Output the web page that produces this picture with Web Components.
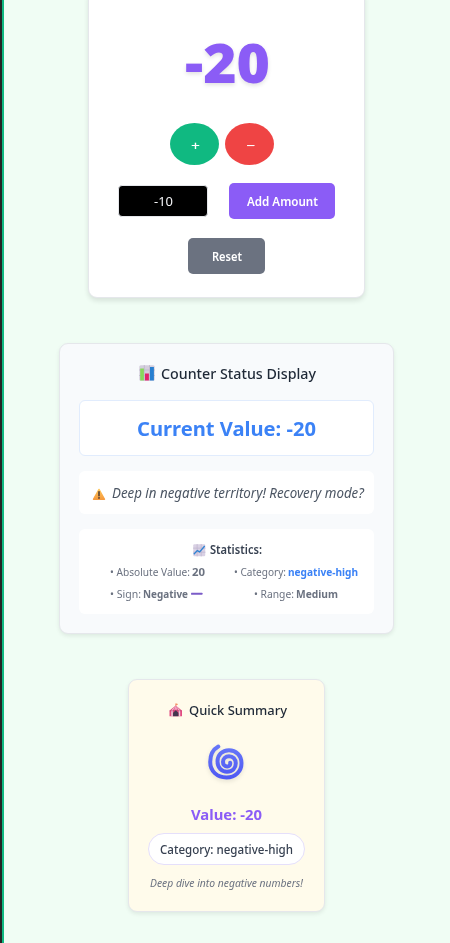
<!DOCTYPE html>
<html lang="en">
<head>
<meta charset="utf-8">
<title>Counter</title>
<style>
html,body{margin:0;height:943px;overflow:hidden}
body{font-family:"Noto Sans","Open Sans",sans-serif;color:#1f2937}
</style>
</head>
<body>
<counter-app></counter-app>
<script>
const define = (name, html, after) => {
  const t = document.createElement('template');
  t.innerHTML = html;
  customElements.define(name, class extends HTMLElement {
    constructor() {
      super();
      this.attachShadow({mode: 'open'}).append(t.content.cloneNode(true));
    }
    connectedCallback() { if (after) after(this, this.shadowRoot); }
  });
};

/* One line of text, condensed horizontally to the width in its "w" attribute. */
define('fit-text', `
<style>
:host{display:block;flex:none;white-space:nowrap;line-height:20px;height:20px}
span{display:inline-block;transform-origin:0 50%;line-height:inherit;vertical-align:top}
</style><span><slot></slot></span>`, (host, root) => {
  const w = +host.getAttribute('w');
  const s = root.querySelector('span');
  host.style.width = w + 'px';
  s.style.transform = 'scaleX(' + w / s.getBoundingClientRect().width + ')';
});

const ICONS = {
  bars: `<rect x=".3" y=".3" width="15.4" height="15.4" rx="1.5" fill="#d4cedd"/><path d="M5.3 0v16M10.5 0v16M0 5h16M0 10.500h16" stroke="#bcb4c9" stroke-width=".7"/><rect x="1.200" y="3.500" width="3.700" height="12" fill="#86d95b"/><rect x="6" y="8.500" width="3.900" height="7" fill="#e0246c"/><rect x="11" y="2" width="3.900" height="13.500" fill="#287fd0"/>`,
  chart: `<rect x=".3" y=".3" width="15.4" height="15.4" rx="1.5" fill="#d9d1e4"/><path d="M5.300 0v16M10.500 0v16M0 5.300h16M0 10.500h16" stroke="#bbb2cb" stroke-width=".8"/><path d="M1 13l4.500-4.500 3 1.500L15 2.500" fill="none" stroke="#2f83d3" stroke-width="1.700"/>`,
  warn: `<defs><linearGradient id="g" x2="0" y2="1"><stop stop-color="#ffc65a"/><stop offset="1" stop-color="#f59a3d"/></linearGradient></defs><path d="M8 2.800L14.300 14H1.700z" fill="url(#g)" stroke="url(#g)" stroke-width="1.600" stroke-linejoin="round"/><path d="M8 5.500v4.500" stroke="#493832" stroke-width="1.700" stroke-linecap="round"/><circle cx="8" cy="12.500" r="1" fill="#493832"/>`,
  minus: `<rect y="6.700" width="16" height="2.600" rx=".6" fill="#7b5cc8"/>`,
  tent: `<path d="M8 3.500V.8l2.200.8L8.300 2.500" fill="#f4875b" stroke="#f4875b" stroke-width=".8"/><path d="M8 3l5.800 4.600 1.600 1.600v6.400H.6V9.200l1.600-1.600z" fill="#e34a80"/><path d="M8 3L4.500 9v6.600H2.700V8.800zM8 3l3.500 6v6.600h1.800V8.800z" fill="#e9ccdc"/><path d="M8 3l2 5H6z" fill="#f1a5bf"/><path d="M.6 9.200h14.800" stroke="#bb4375" stroke-width=".7"/><path d="M4.800 15.600v-4L8 8.700l3.200 2.900v4z" fill="#44364f"/>`,
  spiral: `<defs><linearGradient id="s" x2="0" y2="1"><stop stop-color="#6676f8"/><stop offset="1" stop-color="#505af3"/></linearGradient></defs><path d="M10.300 2.600C5.100 5.500 2.200 11.500 2.200 18c0 9 6.800 15.500 16.300 15.500 9 0 15-6.200 15-14.200S27.800 6.200 21 6.200C14 6.200 9.500 11 9.500 17.500c0 6 4 10.200 9.500 10.200s8.800-3.600 8.800-8.400c0-4.300-2.900-7.100-6.800-7.100-3.500 0-6 2.500-6 5.700 0 2.800 1.700 4.600 4.200 4.600 2 0 3.300-1.500 3-3.800" fill="none" stroke="url(#s)" stroke-width="4" stroke-linecap="round"/>`
};
define('app-icon', `<style>:host{display:block;flex:none}svg{display:block;width:100%;height:100%;overflow:visible}</style>
<svg></svg>`, (host, root) => {
  const n = host.getAttribute('name'), v = root.querySelector('svg');
  v.setAttribute('viewBox', n === 'spiral' ? '0 0 36 36' : '0 0 16 16');
  v.innerHTML = ICONS[n];
  host.style.width = host.style.height = host.getAttribute('size') + 'px';
});

define('app-card', `<style>
:host{display:block;box-sizing:border-box;border:1px solid #e5e7eb;border-radius:9px;box-shadow:0 2px 4px rgba(0,0,0,.08)}
</style><slot></slot>`);

define('action-button', `<style>
:host{display:flex;box-sizing:border-box;align-items:center;justify-content:center;border-radius:5px;height:36px;padding-top:2px;color:#fff;font-size:12.4px;font-weight:600;flex:none}
</style><slot></slot>`);

define('counter-panel', `<style>
:host{display:block}
app-card{width:277px;height:310px;margin-top:-12px;background:#fff;padding:43px 29px 0;box-shadow:0 3px 5px rgba(0,0,0,.1);display:flex;flex-direction:column;align-items:center}
.num{font-size:54.500px;font-weight:900;color:#8b5cf6;line-height:60px;height:60px;text-shadow:0 2px 4px rgba(0,0,0,.12);padding-left:2px}
.pair{display:flex;gap:6px;margin:31px 9px 0 0}
.round{width:49px;height:42px;border-radius:50%;padding:3px 0 0 1px;font-weight:500}
.plus{background:#10b981}.minus{background:#ef4444}
.amount{display:flex;align-items:center;justify-content:space-between;width:217px;height:36px;margin-top:18px}
.field{box-sizing:border-box;width:90px;height:32px;background:#000;border:1px solid #e5e7eb;border-radius:4px;color:#f3f4f6;font-size:12.500px;display:flex;align-items:center;justify-content:center;padding:1px 0 0 1px}
.add{width:106px;background:#8b5cf6}
.reset{width:77px;background:#6b7280;margin-top:19px}
</style>
<app-card>
<fit-text class="num" w="85">-20</fit-text>
<div class="pair"><action-button class="round plus"><fit-text w="9">+</fit-text></action-button><action-button class="round minus"><fit-text w="9">−</fit-text></action-button></div>
<div class="amount"><div class="field"><fit-text w="19">-10</fit-text></div><action-button class="add"><fit-text w="71">Add Amount</fit-text></action-button></div>
<action-button class="reset"><fit-text w="30">Reset</fit-text></action-button>
</app-card>`);

define('status-panel', `<style>
:host{display:block}
app-card{width:335px;height:291px;background:#f8fafc;padding:19px}
.row{display:flex;align-items:center;justify-content:center}
.title{height:20px;gap:6px;font-size:14.900px;font-weight:500;padding-left:2px;padding-bottom:2px}
.box{box-sizing:border-box;background:#fff;border-radius:6px}
.value{height:56px;margin-top:15px;border:1px solid #e1ecfd;color:#3b82f6;font-weight:700;font-size:20.400px}
.msg{height:43px;margin-top:15px;gap:6px;font-style:italic;font-size:13.500px;color:#4b5563;padding:1px 0 0 2px}
.msg app-icon{margin-top:1px}
.stats{height:85px;margin-top:15px;padding:11px 9px 0 11px}
.head{gap:5px;font-size:12px;font-weight:600;color:#374151}
.grid{display:grid;grid-template-columns:1fr 1fr;margin-top:2px;row-gap:2px;font-size:11.400px;color:#6b7280}
.grid .row{height:20px;gap:2px}
b{font-weight:700}.blue{color:#3b82f6}
</style>
<app-card>
<div class="row title"><app-icon name="bars" size="16"></app-icon><fit-text w="155">Counter Status Display</fit-text></div>
<div class="row box value"><fit-text w="179">Current Value: -20</fit-text></div>
<div class="row box msg"><app-icon name="warn" size="14"></app-icon><fit-text w="252">Deep in negative territory! Recovery mode?</fit-text></div>
<div class="box stats">
<div class="row head"><app-icon name="chart" size="12.500"></app-icon><fit-text w="52">Statistics:</fit-text></div>
<div class="grid">
<div class="row" style="margin-left:-2px"><fit-text w="80">• Absolute Value:</fit-text><fit-text w="13"><b>20</b></fit-text></div>
<div class="row"><fit-text w="52">• Category:</fit-text><fit-text w="70" class="blue"><b>negative-high</b></fit-text></div>
<div class="row" style="margin-left:-5px"><fit-text w="31">• Sign:</fit-text><fit-text w="45"><b>Negative</b></fit-text><app-icon name="minus" size="11.500" style="margin-left:1px"></app-icon></div>
<div class="row"><fit-text w="40">• Range:</fit-text><fit-text w="42"><b>Medium</b></fit-text></div>
</div></div>
</app-card>`);

define('summary-panel', `<style>
:host{display:block}
app-card{width:197px;height:233px;background:#fffbeb;padding-top:20px;display:flex;flex-direction:column;align-items:center}
.title{display:flex;align-items:center;gap:6px;font-size:13.300px;font-weight:500;padding-left:3px}
.spiral{margin:24px 1px 0 0;filter:drop-shadow(0 2px 2px rgba(0,0,0,.1))}
.value{margin-top:25px;color:#8b5cf6;font-weight:700;font-size:14.200px}
.pill{box-sizing:border-box;width:157px;height:32px;margin-top:8px;border:1px solid #e5dffb;border-radius:16px;background:#fff;display:flex;align-items:center;justify-content:center;font-size:12.300px;font-weight:500;color:#374151;padding-top:2px}
.note{margin-top:8px;font-style:italic;font-size:11px;color:#6b7280}
</style>
<app-card>
<div class="title"><app-icon name="tent" size="13.500"></app-icon><fit-text w="98">Quick Summary</fit-text></div>
<app-icon class="spiral" name="spiral" size="36"></app-icon>
<fit-text class="value" w="71">Value: -20</fit-text>
<div class="pill"><fit-text w="133">Category: negative-high</fit-text></div>
<fit-text class="note" w="153">Deep dive into negative numbers!</fit-text>
</app-card>`);

define('counter-app', `<style>
:host{display:flex;flex-direction:column;align-items:center;box-sizing:border-box;width:450px;height:943px;overflow:hidden;padding-right:1px;border-left:2px solid #242424;box-shadow:inset 2px 0 #10b981;padding-left:2px;background:#f0fdf4}
status-panel{margin-top:45px}summary-panel{margin-top:45px}
</style><counter-panel></counter-panel><status-panel></status-panel><summary-panel></summary-panel>`);
</script>
</body>
</html>
